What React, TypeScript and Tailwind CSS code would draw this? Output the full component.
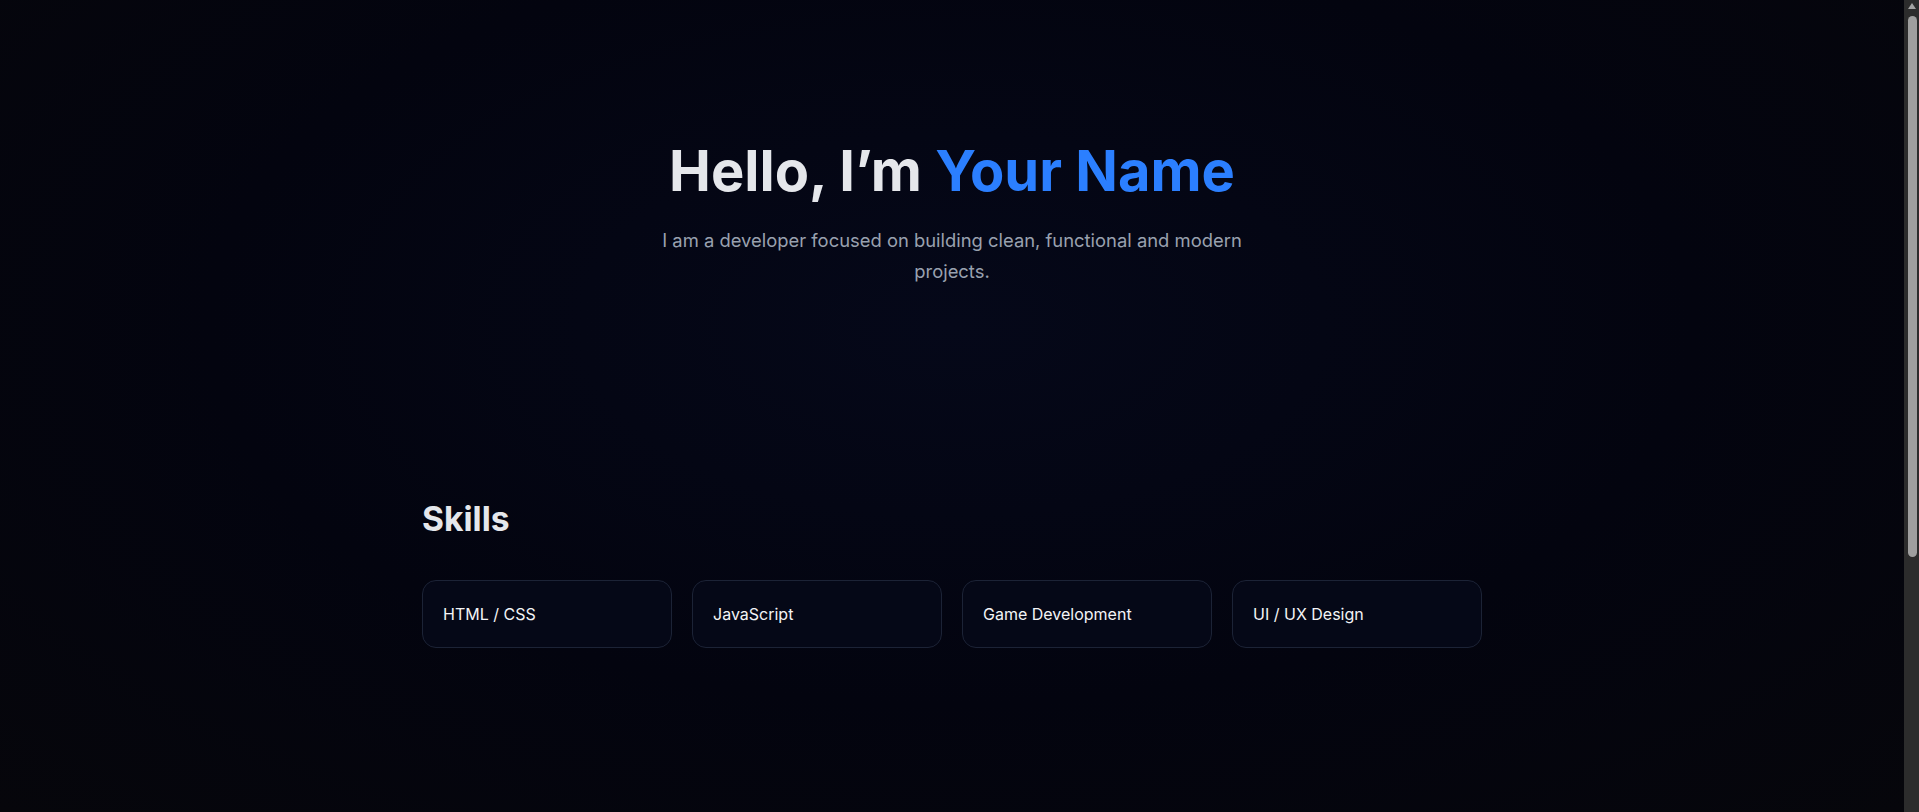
const skills = ['HTML / CSS', 'JavaScript', 'Game Development', 'UI / UX Design'];

function Scrollbar() {
  return (
    <aside className="flex w-[15px] shrink-0 flex-col items-center bg-[#2c2c2c] pl-[1px]">
      <div className="mt-[3px] h-0 w-0 border-x-[4px] border-b-[6px] border-x-transparent border-b-[#a3a3a3]" />
      <div className="mt-[7px] h-[541px] w-[9px] rounded-full bg-[#9f9f9f]" />
    </aside>
  );
}

export default function App() {
  return (
    <div className="flex h-screen overflow-hidden font-['Inter','Noto_Sans',sans-serif] text-gray-200">
      <main className="flex-1 bg-[radial-gradient(ellipse_at_50%_40%,#050819_0%,#03040f_55%,#06060b_100%)]">
        <section className="px-5 pt-[138px] text-center">
          <h1 className="text-[56px] font-bold leading-[1.2] text-gray-200">
            Hello, I’m <span className="text-blue-500">Your Name</span>
          </h1>
          <p className="mx-auto mt-[20px] max-w-[600px] text-[1.15rem] leading-[1.66] text-gray-400">
            I am a developer focused on building clean, functional and modern projects.
          </p>
        </section>

        <section className="mx-auto max-w-[1100px] px-5 pt-[213px]">
          <h2 className="mb-10 text-[2.1rem] font-bold leading-[1.2] text-gray-200">Skills</h2>
          <div className="grid grid-cols-4 gap-5">
            {skills.map((skill) => (
              <div
                key={skill}
                className="rounded-[14px] border border-[#1c2336] bg-[#050817] p-5 text-base leading-[26px] text-gray-100"
              >
                {skill}
              </div>
            ))}
          </div>
        </section>
      </main>
      <Scrollbar />
    </div>
  );
}
